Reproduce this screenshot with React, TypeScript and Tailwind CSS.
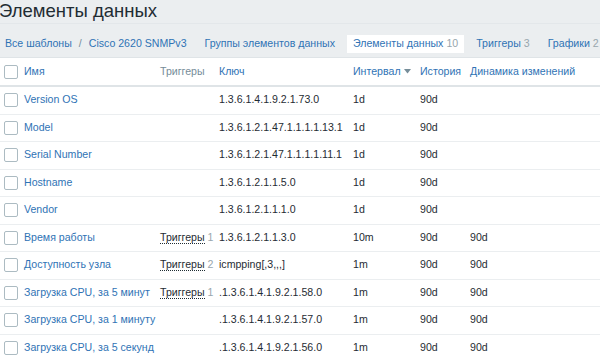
import React from "react";

type Row = {
  name: string;
  trig?: number;
  key: string;
  interval: string;
  history: string;
  trends?: string;
};

const rows: Row[] = [
  { name: "Version OS", key: "1.3.6.1.4.1.9.2.1.73.0", interval: "1d", history: "90d" },
  { name: "Model", key: "1.3.6.1.2.1.47.1.1.1.1.13.1", interval: "1d", history: "90d" },
  { name: "Serial Number", key: "1.3.6.1.2.1.47.1.1.1.1.11.1", interval: "1d", history: "90d" },
  { name: "Hostname", key: "1.3.6.1.2.1.1.5.0", interval: "1d", history: "90d" },
  { name: "Vendor", key: "1.3.6.1.2.1.1.1.0", interval: "1d", history: "90d" },
  { name: "Время работы", trig: 1, key: "1.3.6.1.2.1.1.3.0", interval: "10m", history: "90d", trends: "90d" },
  { name: "Доступность узла", trig: 2, key: "icmpping[,3,,,]", interval: "1m", history: "90d", trends: "90d" },
  { name: "Загрузка CPU, за 5 минут", trig: 1, key: ".1.3.6.1.4.1.9.2.1.58.0", interval: "1m", history: "90d", trends: "90d" },
  { name: "Загрузка CPU, за 1 минуту", key: ".1.3.6.1.4.1.9.2.1.57.0", interval: "1m", history: "90d", trends: "90d" },
  { name: "Загрузка CPU, за 5 секунд", key: ".1.3.6.1.4.1.9.2.1.56.0", interval: "1m", history: "90d", trends: "90d" },
];

function Box() {
  return <div className="w-[14px] h-[14px] rounded-[2px] border border-[#acbbc2] bg-white shrink-0" />;
}

export default function App() {
  return (
    <div
      className="w-[600px] h-[358px] overflow-hidden bg-white text-[10.6px] text-[#1f2c33]"
      style={{ fontFamily: '"Liberation Sans", Arial, sans-serif' }}
    >
      <div className="h-[23px] bg-[#ebeef0] flex items-center">
        <h1 className="text-[18.5px] leading-none text-[#1f2c33] -ml-[1px]">Элементы данных</h1>
      </div>
      <div className="h-[35px] pt-[6px] bg-[#ebeef0] border-t border-[#e3e7ea] border-b border-b-[#dfe4e7] flex items-center whitespace-nowrap">
        <div className="flex items-center pl-[5px] text-[#2f73b5]">
          <span>Все шаблоны</span>
          <span className="mx-[7px] text-[#768d99]">/</span>
          <span>Cisco 2620 SNMPv3</span>
        </div>
        <span className="ml-[18px] text-[#2f73b5]">Группы элементов данных</span>
        <div className="ml-[12px] h-[18px] px-[6px] bg-white flex items-center text-[#2f73b5]">
          Элементы данных<span className="ml-[3px] text-[#98a6ad]">10</span>
        </div>
        <span className="ml-[12px] text-[#2f73b5]">
          Триггеры<span className="ml-[3px] text-[#98a6ad]">3</span>
        </span>
        <span className="ml-[18px] text-[#2f73b5]">
          Графики<span className="ml-[3px] text-[#98a6ad]">2</span>
        </span>
      </div>
      <div className="flex items-center h-[29px] border-b-2 border-[#dfe4e7]">
        <div className="w-[24px] pl-[4px] flex"><Box /></div>
        <div className="w-[136px] text-[#2f73b5]">Имя</div>
        <div className="w-[59px] text-[#768d99]">Триггеры</div>
        <div className="w-[134px] text-[#2f73b5]">Ключ</div>
        <div className="w-[67px] text-[#2f73b5] flex items-center">
          Интервал
          <svg width="7" height="5" viewBox="0 0 7 5" className="ml-[3px] mt-[1px]">
            <path d="M0 0 L7 0 L3.5 4.5 Z" fill="#768d99" />
          </svg>
        </div>
        <div className="w-[50px] text-[#2f73b5]">История</div>
        <div className="flex-1 text-[#2f73b5] whitespace-nowrap">Динамика изменений</div>
      </div>
      {rows.map((r, i) => (
        <div key={i} className="flex items-center h-[27.5px] border-b border-[#ebeef0]">
          <div className="w-[24px] pl-[4px] flex"><Box /></div>
          <div className="w-[136px] text-[#2f73b5] whitespace-nowrap">{r.name}</div>
          <div className="w-[59px] whitespace-nowrap">
            {r.trig ? (
              <>
                <span className="border-b border-dotted border-[#1f2c33]">Триггеры</span>
                <span className="ml-[3px] text-[#98a6ad]">{r.trig}</span>
              </>
            ) : null}
          </div>
          <div className="w-[134px] whitespace-nowrap">{r.key}</div>
          <div className="w-[67px]">{r.interval}</div>
          <div className="w-[50px]">{r.history}</div>
          <div className="flex-1">{r.trends ?? ""}</div>
        </div>
      ))}
    </div>
  );
}
